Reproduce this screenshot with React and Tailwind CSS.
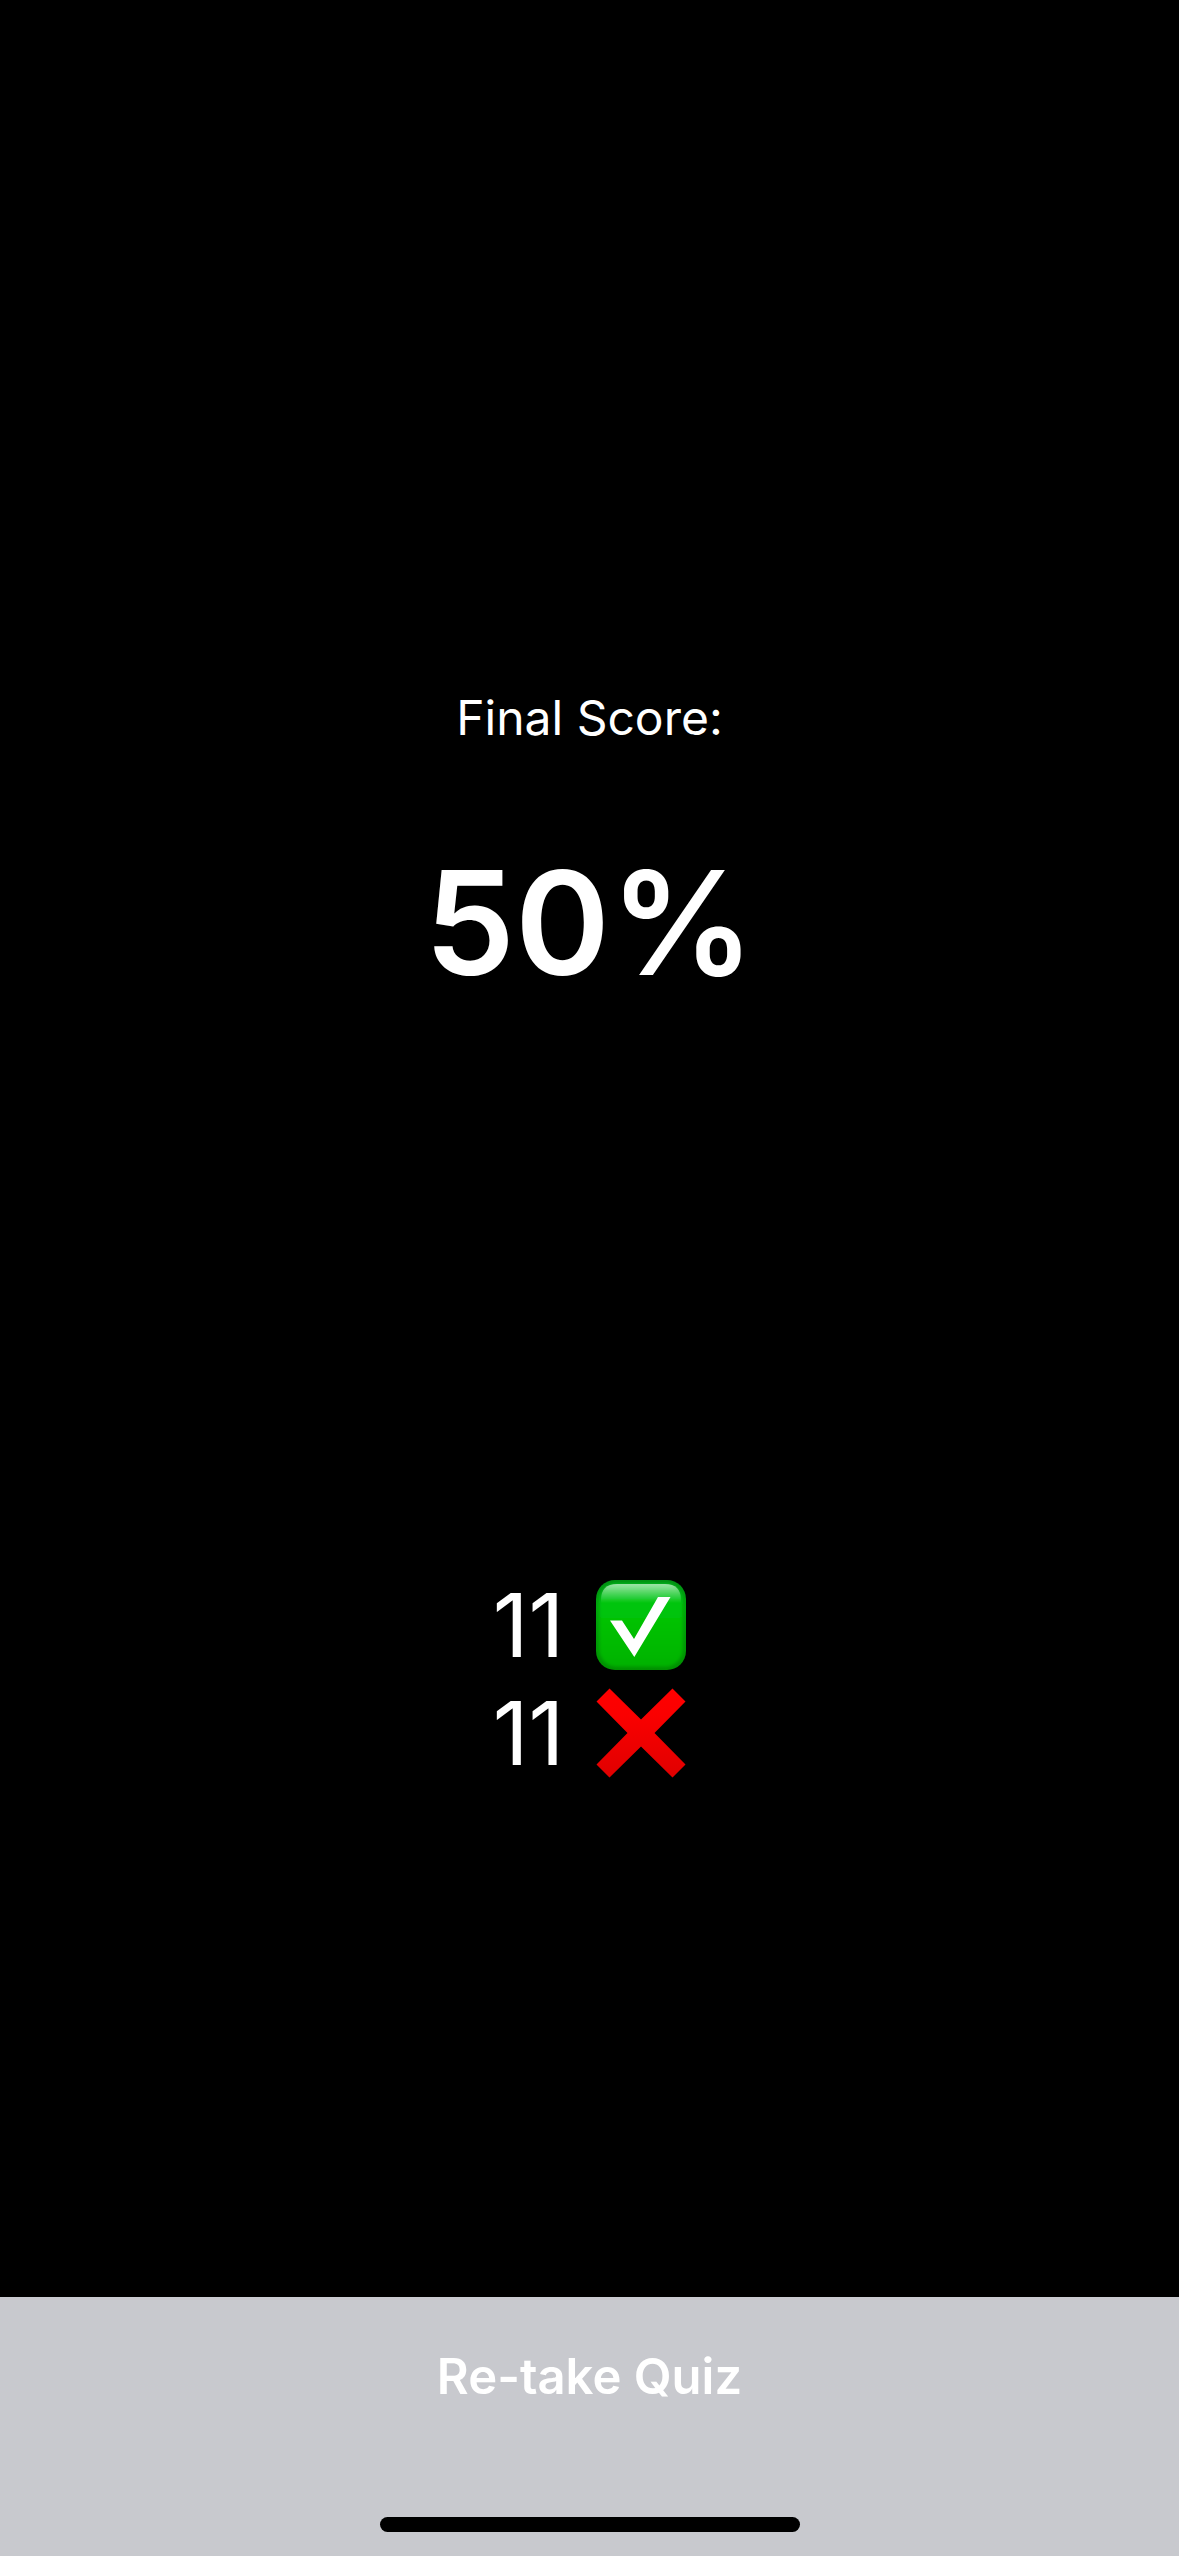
function CheckIcon() {
  return (
    <svg viewBox="0 0 90 90" className="size-[90px]" role="img" aria-label="Correct answers">
      <defs>
        <linearGradient id="checkBase" x1="0" y1="0" x2="0" y2="1">
          <stop offset="0" stopColor="#009014" />
          <stop offset="0.3" stopColor="#00a60c" />
          <stop offset="1" stopColor="#009000" />
        </linearGradient>
        <linearGradient id="checkFace" x1="0" y1="0" x2="0" y2="1">
          <stop offset="0" stopColor="#00c020" />
          <stop offset="0.25" stopColor="#00c60c" />
          <stop offset="0.6" stopColor="#00be00" />
          <stop offset="1" stopColor="#00b200" />
        </linearGradient>
        <linearGradient id="checkGloss" x1="0" y1="0" x2="0" y2="1">
          <stop offset="0" stopColor="#fff" stopOpacity="0.62" />
          <stop offset="0.5" stopColor="#fff" stopOpacity="0.3" />
          <stop offset="1" stopColor="#fff" stopOpacity="0" />
        </linearGradient>
        <filter id="checkSoft" x="-10%" y="-10%" width="120%" height="120%">
          <feGaussianBlur stdDeviation="1.5" />
        </filter>
        <clipPath id="checkClip">
          <rect width="90" height="90" rx="19" />
        </clipPath>
      </defs>
      <g clipPath="url(#checkClip)">
        <rect width="90" height="90" fill="url(#checkBase)" />
        <rect x="3.5" y="3.5" width="83" height="83" rx="17" fill="url(#checkFace)" filter="url(#checkSoft)" />
        <path d="M5 23V20Q5 4 21 4H69Q85 4 85 20V23Z" fill="url(#checkGloss)" />
      </g>
      <path d="M14 40.5H26L38 59L62 17H74.500L38.300 77Z" fill="#fff" />
    </svg>
  );
}

function CrossIcon() {
  return (
    <svg viewBox="0 0 90 90" className="size-[90px]" role="img" aria-label="Wrong answers">
      <defs>
        <linearGradient id="crossFill" x1="0" y1="0" x2="0" y2="1">
          <stop offset="0" stopColor="#ff0000" />
          <stop offset="0.3" stopColor="#fa0000" />
          <stop offset="1" stopColor="#e00000" />
        </linearGradient>
      </defs>
      <path
        d="M13.500 0.500L45 31.500L76.500 0.500L89.500 13.500L58.500 45L89.500 76.500L76.500 89.500L45 58.500L13.500 89.500L0.500 76.500L31.500 45L0.500 13.500Z"
        fill="url(#crossFill)"
      />
    </svg>
  );
}

function Result({ count, children }) {
  return (
    <li className="flex h-[108px] items-center gap-8">
      <span className="text-[88px] leading-[108px] font-normal">{count}</span>
      {children}
    </li>
  );
}

export default function App() {
  return (
    <div className="flex min-h-screen flex-col bg-black font-['Inter',sans-serif] text-white">
      <main className="flex flex-1 flex-col items-center justify-center gap-[558px] pt-[178px]">
        <section className="flex flex-col items-center gap-[85px]">
          <h1 className="text-[48px] leading-[60px] font-normal">Final Score:</h1>
          <p className="text-[144px] leading-[180px] font-semibold">50%</p>
        </section>
        <ul className="flex flex-col">
          <Result count={11}>
            <CheckIcon />
          </Result>
          <Result count={11}>
            <CrossIcon />
          </Result>
        </ul>
      </main>
      <footer className="flex flex-col items-center gap-[109px] bg-[#c8c9ce] pt-12 pb-6">
        <button type="button" className="px-6 text-[49px] leading-[63px] font-semibold">
          Re-take Quiz
        </button>
        <div className="h-[15px] w-[420px] rounded-full bg-black" />
      </footer>
    </div>
  );
}
